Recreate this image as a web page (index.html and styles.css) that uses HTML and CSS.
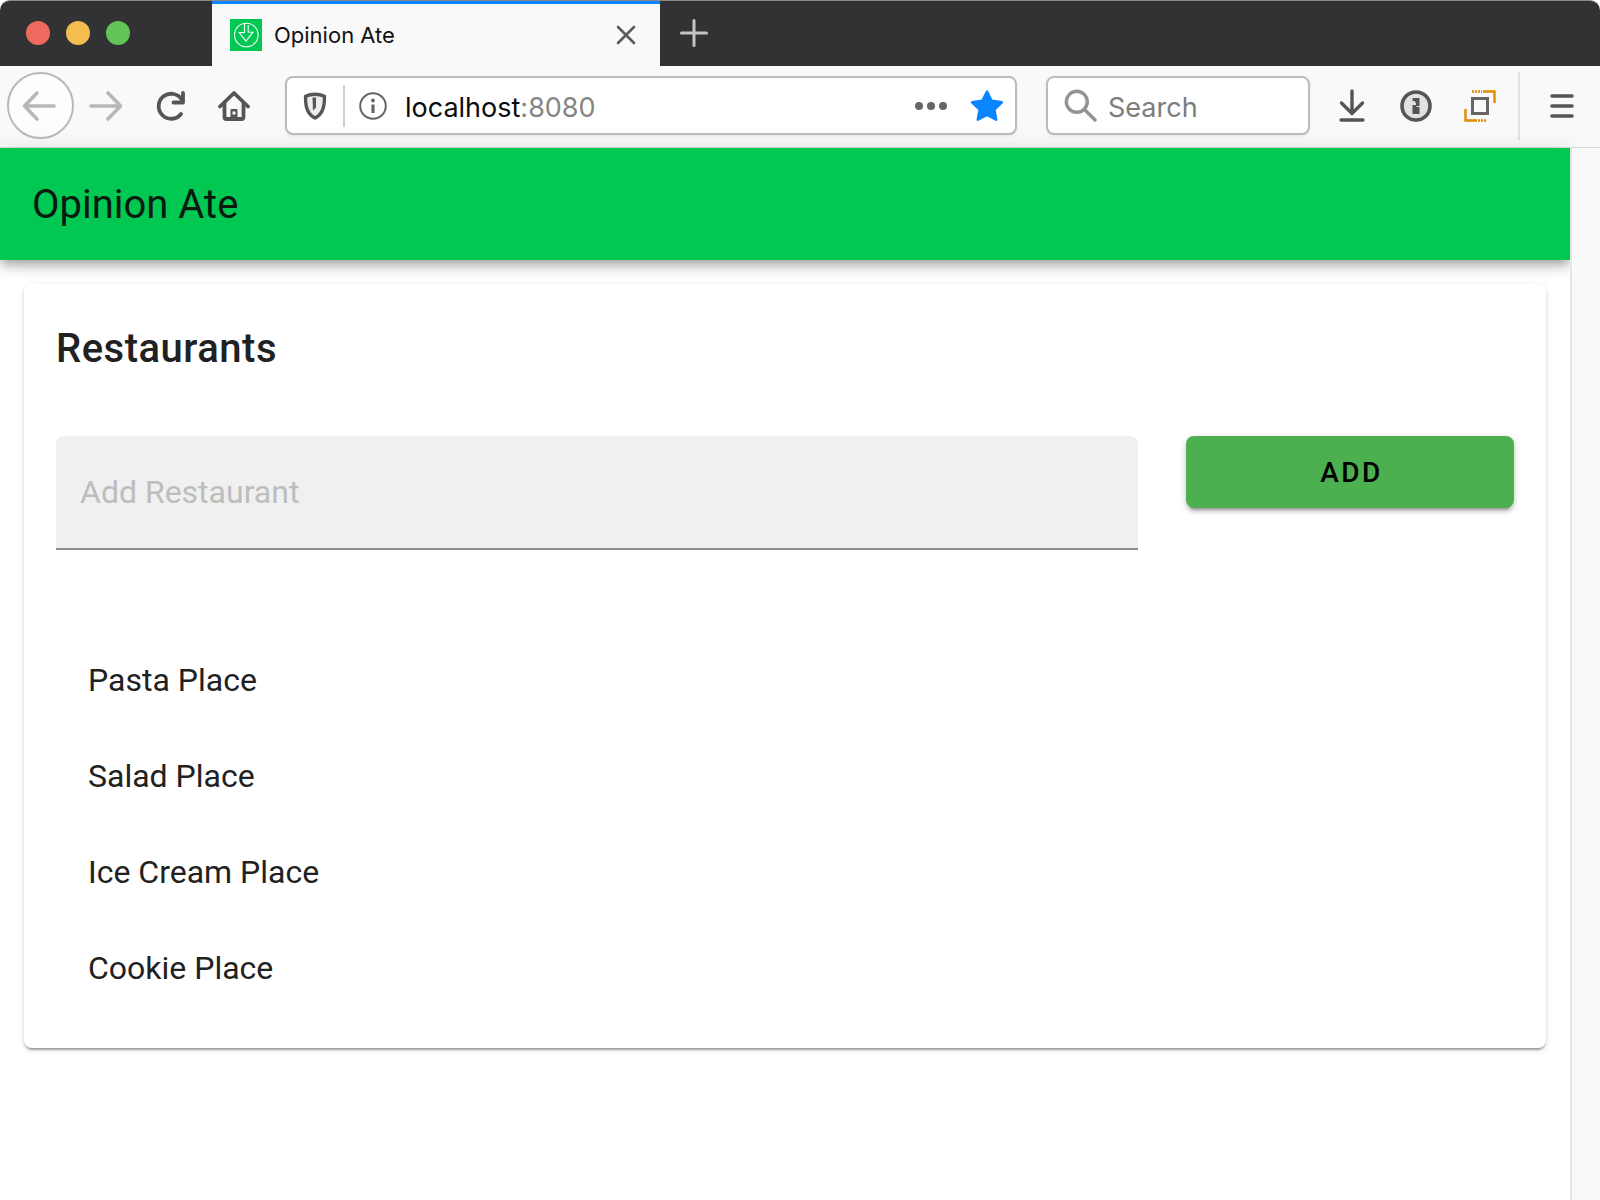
FILE: index.html
```html
<!DOCTYPE html>
<html lang="en">
<head>
<meta charset="utf-8">
<title>Opinion Ate</title>
<link rel="stylesheet" href="styles.css">
</head>
<body>
<div class="tabbar">
  <div class="lights">
    <span class="light light-red"></span>
    <span class="light light-yellow"></span>
    <span class="light light-green"></span>
  </div>
  <div class="tab">
    <span class="favicon">
      <svg width="32" height="32" viewBox="0 0 32 32" fill="none" stroke="#fff" stroke-width="1.1"><circle cx="16.300" cy="16" r="11.800"/><path d="M14.500 4.500v9H9.200l6.800 8.500 7-8.800-4.800-.2V6"/></svg>
    </span>
    <span class="tab-title">Opinion Ate</span>
    <svg class="tab-close" width="20" height="20" viewBox="0 0 20 20" stroke="#5b5b5c" stroke-width="2.6" stroke-linecap="round"><path d="M2 2l16 16M18 2L2 18"/></svg>
  </div>
  <svg class="tab-new" width="28" height="28" viewBox="0 0 28 28" stroke="#c4c4c6" stroke-width="3" stroke-linecap="round"><path d="M14 1.500v25M1.500 14h25"/></svg>
</div>
<div class="toolbar">
  <div class="back">
    <svg width="34" height="30" viewBox="0 0 34 30" fill="none" stroke="#b8b8b8" stroke-width="3.600" stroke-linecap="round" stroke-linejoin="round"><path d="M32 15H3M15 2L2.500 15 15 28"/></svg>
  </div>
  <svg class="forward" width="34" height="30" viewBox="0 0 34 30" fill="none" stroke="#b8b8b8" stroke-width="3.600" stroke-linecap="round" stroke-linejoin="round"><path d="M2 15h29M19 2l12.500 13L19 28"/></svg>
  <svg class="reload" width="32" height="32" viewBox="0 0 32 32" fill="none" stroke="#555" stroke-width="3.800" stroke-linecap="round" stroke-linejoin="round"><path d="M27 10a12.500 12.500 0 1 0 -1 14"/><path d="M28 3v9.500h-9.500" /></svg>
  <svg class="home" width="32" height="32" viewBox="0 0 32 32" fill="none" stroke="#555" stroke-width="3.800" stroke-linecap="round" stroke-linejoin="round"><path d="M2 16.500L16 3l14 13.500"/><path d="M6.500 13v14a2 2 0 0 0 2 2h15a2 2 0 0 0 2-2V13"/><path d="M12.500 29v-9a1 1 0 0 1 1-1h5a1 1 0 0 1 1 1v9z" fill="#555" stroke="none"/><rect x="14.500" y="21.500" width="3" height="3" fill="#f9f9fa" stroke="none"/></svg>
  <div class="urlbar">
    <svg class="shield" width="24" height="28" viewBox="0 0 24 28"><path d="M12 2.200C8.500 2.200 5.200 3 2.600 4.300 2.200 12.500 3 21.500 12 26c9-4.500 9.800-13.500 9.400-21.700C18.800 3 15.500 2.200 12 2.200z" fill="#ececec" stroke="#555" stroke-width="3.400" stroke-linejoin="round"/><path d="M9.500 5.500h3.500v10l-3 3z" fill="#555"/></svg>
    <span class="url-sep"></span>
    <svg class="info" width="28" height="28" viewBox="0 0 28 28" fill="none" stroke="#666" stroke-width="2"><circle cx="14" cy="14" r="12.800"/><circle cx="14" cy="8.500" r="1.900" fill="#666" stroke="none"/><path d="M14 12.500V21" stroke-width="3.200"/></svg>
    <span class="url-text">localhost<span class="url-port">:8080</span></span>
    <span class="dots"><i></i><i></i><i></i></span>
    <svg class="star" width="34" height="33" viewBox="0 0 34 33"><path d="M17 2.500l4.600 9.300 10.300 1.500-7.500 7.200 1.800 10.200L17 25.800l-9.200 4.900 1.800-10.200-7.500-7.200 10.300-1.500z" fill="#0a84ff" stroke="#0a84ff" stroke-width="2.500" stroke-linejoin="round"/></svg>
  </div>
  <div class="searchbar">
    <svg width="33" height="33" viewBox="0 0 33 33" fill="none" stroke="#939393" stroke-width="3.400" stroke-linecap="round"><circle cx="12.800" cy="12.800" r="10.500"/><path d="M20.500 20.500L31 31"/></svg>
    <span class="search-text">Search</span>
  </div>
  <svg class="download" width="26" height="33" viewBox="0 0 26 33" fill="none" stroke="#555" stroke-width="3.400" stroke-linecap="round" stroke-linejoin="round"><path d="M13 2v22M2.500 14L13 24.500 23.500 14M2 31h22"/></svg>
  <svg class="onepass" width="32" height="32" viewBox="0 0 32 32"><circle cx="16" cy="16" r="14" fill="#e1e1e2" stroke="#555" stroke-width="3.600"/><path d="M12.500 8h7v8h-3v1h3v7h-7v-9h3.500v-2.500h-1V11h-2.500z" fill="#555"/></svg>
  <svg class="frame" width="32" height="32" viewBox="0 0 32 32" fill="none"><path d="M19 1.500h11.500V13M13 30.500H1.500V19" stroke="#e08a00" stroke-width="2.400"/><path d="M8 1.500h10M14 30.500h9" stroke="#e08a00" stroke-width="2.400" stroke-dasharray="2 1"/><rect x="8.500" y="8.500" width="15" height="15" stroke="#666" stroke-width="3"/></svg>
  <span class="tool-sep"></span>
  <svg class="menu" width="24" height="24" viewBox="0 0 24 24" stroke="#555" stroke-width="3.600" stroke-linecap="round"><path d="M2 2h20M2 12h20M2 22h20"/></svg>
</div>
<div class="viewport">
  <div class="page">
    <header class="appbar"><h1 class="brand">Opinion Ate</h1></header>
    <main class="card">
      <h2 class="card-title">Restaurants</h2>
      <form class="add-form">
        <div class="field"><span class="placeholder">Add Restaurant</span></div>
        <button class="add-button" type="button">ADD</button>
      </form>
      <ul class="list">
        <li>Pasta Place</li>
        <li>Salad Place</li>
        <li>Ice Cream Place</li>
        <li>Cookie Place</li>
      </ul>
    </main>
  </div>
  <div class="scrollbar"></div>
</div>
</body>
</html>
```
FILE: styles.css
```css
* { box-sizing: border-box; }
html, body { margin: 0; height: 100%; }
body { width: 1600px; height: 1200px; overflow: hidden; background: #fff; font-family: Roboto, sans-serif; display: flex; flex-direction: column; }

.tabbar { height: 66px; flex: none; background: #323234; border-top: 1px solid #8a8a8a; border-radius: 10px 10px 0 0; display: flex; align-items: stretch; }
.lights { width: 212px; flex: none; display: flex; align-items: center; gap: 16px; padding: 0 0 2px 26px; }
.light { width: 24px; height: 24px; border-radius: 50%; }
.light-red { background: #ee6a5f; }
.light-yellow { background: #f5bd4f; }
.light-green { background: #61c454; }
.tab { width: 448px; flex: none; background: #f9f9fa; border-top: 3px solid #0a84ff; display: flex; align-items: center; padding: 0 0 0 18px; }
.favicon { width: 32px; height: 32px; background: #00c853; display: block; flex: none; }
.favicon svg { display: block; }
.tab-title { margin-left: 12px; font: 400 22px Inter, sans-serif; color: #111; flex: 1; }
.tab-close { margin-right: 24px; flex: none; }
.tab-new { align-self: center; margin: 0 0 2px 20px; }

.toolbar { height: 82px; flex: none; background: #f9f9fa; border-bottom: 1px solid #dcdcdc; display: flex; align-items: center; padding: 0 0 2px 7px; }
.back { width: 67px; height: 67px; flex: none; border: 2px solid #b9b9b9; border-radius: 50%; background: #fdfdfd; display: flex; align-items: center; justify-content: center; padding-right: 3px; }
.forward { margin-left: 15px; flex: none; }
.reload { margin-left: 32px; flex: none; }
.home { margin-left: 31px; flex: none; }
.urlbar { margin-left: 35px; width: 732px; height: 59px; flex: none; background: #fff; border: 2px solid #bcbcbc; border-radius: 8px; display: flex; align-items: center; padding-left: 16px; box-shadow: 0 1px 3px rgba(0,0,0,.08); }
.shield { flex: none; }
.url-sep { width: 2px; height: 42px; background: #d0d0d0; margin-left: 16px; flex: none; }
.info { margin-left: 14px; flex: none; }
.url-text { margin-left: 18px; padding-top: 3px; font: 400 27px Inter, sans-serif; color: #0c0c0d; flex: 1; }
.url-port { color: #858585; }
.dots { display: flex; gap: 4px; margin-right: 23px; }
.dots i { width: 8px; height: 8px; border-radius: 50%; background: #666; display: block; }
.star { margin-right: 11px; flex: none; }
.searchbar { margin-left: 29px; width: 264px; height: 59px; flex: none; background: #fff; border: 2px solid #bcbcbc; border-radius: 8px; display: flex; align-items: center; padding-left: 16px; box-shadow: 0 1px 3px rgba(0,0,0,.08); }
.search-text { margin-left: 11px; padding-top: 3px; font: 400 27px Inter, sans-serif; color: #7d7d7d; }
.download { margin-left: 29px; flex: none; }
.onepass { margin-left: 35px; flex: none; }
.frame { margin-left: 32px; flex: none; }
.tool-sep { width: 2px; height: 68px; background: #e0e0e0; margin-left: 22px; flex: none; }
.menu { margin-left: 30px; flex: none; }

.viewport { flex: 1; display: flex; min-height: 0; }
.page { width: 1570px; flex: none; background: #fff; }
.scrollbar { flex: 1; background: #f9f9f9; border-left: 2px solid #e6e6e6; position: relative; z-index: 1; }

.appbar { height: 112px; background: #00c853; display: flex; align-items: center; padding-left: 32px; box-shadow: 0 4px 8px -2px rgba(0,0,0,.2), 0 8px 10px rgba(0,0,0,.14), 0 2px 20px rgba(0,0,0,.12); position: relative; }
.brand { margin: 0; font: 400 40px Roboto, sans-serif; color: #0a1a0f; }

.card { margin: 24px 24px 0; height: 764px; background: #fff; border-radius: 8px; padding: 32px; box-shadow: 0 4px 2px -2px rgba(0,0,0,.2), 0 2px 2px rgba(0,0,0,.14), 0 2px 6px rgba(0,0,0,.12); position: relative; }
.card-title { margin: 0; font: 500 40px/66px Roboto, sans-serif; letter-spacing: .5px; color: #212121; }
.add-form { display: flex; gap: 48px; margin-top: 54px; align-items: flex-start; }
.field { width: 1082px; height: 114px; background: #f0f0f0; border-radius: 8px 8px 0 0; border-bottom: 2px solid #8c8c8c; display: flex; align-items: center; padding-left: 24px; }
.placeholder { font: 400 32px Roboto, sans-serif; color: #bdbdbd; }
.add-button { width: 328px; height: 72px; border: 0; border-radius: 8px; padding: 0 0 0 3px; background: #4caf50; color: #000; font: 500 28px Roboto, sans-serif; letter-spacing: 2.500px; box-shadow: 0 6px 2px -4px rgba(0,0,0,.2), 0 4px 4px rgba(0,0,0,.14), 0 2px 10px rgba(0,0,0,.12); }
.list { list-style: none; margin: 82px 0 0; padding: 0 0 0 32px; }
.list li { height: 96px; display: flex; align-items: center; font: 400 32px Roboto, sans-serif; color: #212121; }
```
